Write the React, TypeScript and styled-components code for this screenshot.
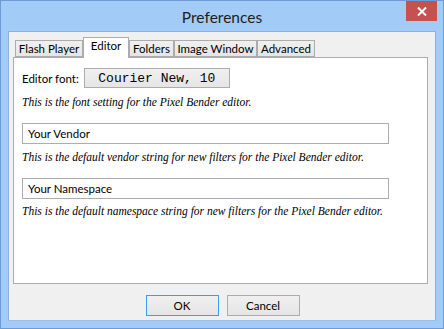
import React from "react";
import styled, { createGlobalStyle } from "styled-components";

const Global = createGlobalStyle`
  html, body { margin: 0; padding: 0; background: #a3cbf7; }
  * { box-sizing: border-box; }
`;

const UI_FONT = `Lato, "Liberation Sans", sans-serif`;

const Window = styled.div`
  width: 444px;
  height: 329px;
  background: #a3cbf7;
  border: 1px solid #6e9bd6;
  display: flex;
  flex-direction: column;
  font-family: ${UI_FONT};
  font-size: 11.5px;
  color: #000;
`;

const TitleBar = styled.div`
  position: relative;
  height: 30px;
  flex: none;
  display: flex;
  align-items: center;
  justify-content: center;
  padding-top: 1px;
`;

const Title = styled.div`
  font-size: 15.5px;
  color: #1e1e1e;
`;

const CloseButton = styled.div`
  position: absolute;
  top: 0;
  right: 6px;
  width: 31px;
  height: 20px;
  background: #c75050;
  display: flex;
  align-items: center;
  justify-content: center;
`;

const Client = styled.div`
  flex: 1;
  margin: 0 7px 7px 7px;
  background: #f0f0f0;
  border: 1px solid #8eb1dc;
  border-bottom-color: #9dbfe8;
  padding: 5px 7px 0 4px;
  display: flex;
  flex-direction: column;
`;

const TabStrip = styled.div`
  display: flex;
  align-items: flex-end;
  padding-left: 2px;
  height: 20px;
  position: relative;
  z-index: 1;
`;

const Tab = styled.div<{ $w: number; $active?: boolean }>`
  width: ${(p) => p.$w}px;
  height: ${(p) => (p.$active ? 21 : 17)}px;
  margin-bottom: ${(p) => (p.$active ? -1 : 0)}px;
  border: 1px solid #acacac;
  border-bottom: ${(p) => (p.$active ? "none" : "1px solid #acacac")};
  background: ${(p) =>
    p.$active ? "#ffffff" : "linear-gradient(#f0f0f0, #e5e5e5)"};
  display: flex;
  align-items: ${(p) => (p.$active ? "flex-start" : "center")};
  padding-top: ${(p) => (p.$active ? 1 : 0)}px;
  justify-content: center;
  white-space: nowrap;
`;

const Panel = styled.div`
  height: 227px;
  flex: none;
  background: #fff;
  border: 1px solid #acacac;
  padding: 10px 8px 0 8px;
  display: flex;
  flex-direction: column;
  align-items: flex-start;
`;

const FontRow = styled.div`
  display: flex;
  align-items: center;
  gap: 5px;
`;

const FontButton = styled.div`
  width: 146px;
  height: 20px;
  border: 1px solid #acacac;
  background: linear-gradient(#f0f0f0, #e5e5e5);
  font-family: "Liberation Mono", "Courier New", monospace;
  font-size: 13px;
  display: flex;
  align-items: center;
  justify-content: center;
`;

const Desc = styled.div<{ $top: number }>`
  margin-top: ${(p) => p.$top}px;
  font-family: "Liberation Serif", "Times New Roman", serif;
  font-style: italic;
  font-size: 11.5px;
  line-height: 14px;
  white-space: nowrap;
`;

const TextInput = styled.div<{ $top: number }>`
  margin-top: ${(p) => p.$top}px;
  width: 367px;
  height: 21px;
  border: 1px solid #abadb3;
  background: #fff;
  padding-left: 5px;
  display: flex;
  align-items: center;
`;

const ButtonRow = styled.div`
  flex: 1;
  display: flex;
  justify-content: center;
  align-items: flex-start;
  gap: 8px;
  padding-top: 11px;
  padding-left: 4px;
`;

const DialogButton = styled.div<{ $default?: boolean }>`
  width: 73px;
  height: 21px;
  border: 1px solid ${(p) => (p.$default ? "#3c9cf0" : "#acacac")};
  background: linear-gradient(#f0f0f0, #e5e5e5);
  display: flex;
  align-items: center;
  justify-content: center;
`;

export default function App() {
  return (
    <>
      <Global />
      <Window>
        <TitleBar>
          <Title>Preferences</Title>
          <CloseButton>
            <svg width="10" height="9" viewBox="0 0 10 9">
              <path d="M1 0.5 L9 8.5 M9 0.5 L1 8.5" stroke="#fff" strokeWidth="2" />
            </svg>
          </CloseButton>
        </TitleBar>
        <Client>
          <TabStrip>
            <Tab $w={68}>Flash Player</Tab>
            <Tab $w={46} $active>
              Editor
            </Tab>
            <Tab $w={45}>Folders</Tab>
            <Tab $w={83}>Image Window</Tab>
            <Tab $w={58}>Advanced</Tab>
          </TabStrip>
          <Panel>
            <FontRow>
              <span>Editor font:</span>
              <FontButton>Courier New, 10</FontButton>
            </FontRow>
            <Desc $top={7}>This is the font setting for the Pixel Bender editor.</Desc>
            <TextInput $top={14}>Your Vendor</TextInput>
            <Desc $top={6}>
              This is the default vendor string for new filters for the Pixel Bender editor.
            </Desc>
            <TextInput $top={14}>Your Namespace</TextInput>
            <Desc $top={5}>
              This is the default namespace string for new filters for the Pixel Bender editor.
            </Desc>
          </Panel>
          <ButtonRow>
            <DialogButton $default>OK</DialogButton>
            <DialogButton>Cancel</DialogButton>
          </ButtonRow>
        </Client>
      </Window>
    </>
  );
}
